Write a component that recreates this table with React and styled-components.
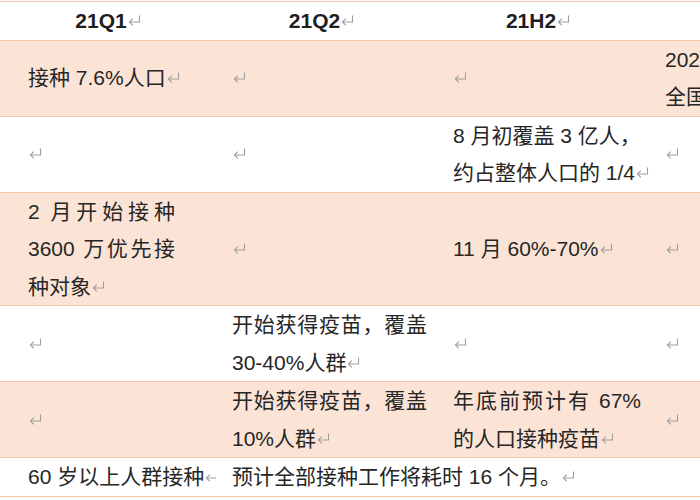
import React from 'react';
import styled, { createGlobalStyle } from 'styled-components';

const GlobalStyle = createGlobalStyle`
  html, body {
    margin: 0;
    padding: 0;
    background: #ffffff;
  }
  body {
    width: 700px;
    height: 500px;
    overflow: hidden;
    font-family: "Liberation Sans", "Noto Sans CJK SC", sans-serif;
    color: #262626;
  }
`;

const Page = styled.div`
  width: 700px;
  height: 500px;
  overflow: hidden;
  padding-top: 1px;
  box-sizing: border-box;
`;

const Table = styled.div`
  display: grid;
  grid-template-columns: 216px 221px 212px 200px;
  width: 849px;
  border-top: 1px solid #f7c6a6;
  font-size: 21px;
  line-height: 37.5px;
`;

const HeadCell = styled.div`
  padding: 0 ${p => p.$pr}px 0 ${p => p.$pl}px;
  border-bottom: 1px solid #f7c6a6;
  text-align: center;
  font-weight: bold;
  color: #1f1f1f;
  white-space: nowrap;
`;

const Cell = styled.div`
  grid-column: span ${p => p.$span || 1};
  display: flex;
  flex-direction: column;
  justify-content: center;
  padding: 0 ${p => p.$pr}px 0 ${p => p.$pl}px;
  background: ${p => (p.$shade ? '#fbe4d6' : '#ffffff')};
  border-bottom: 1px solid #f7c6a6;
  white-space: nowrap;
  min-height: ${p => p.$lines * 37.5}px;
`;

const Line = styled.div`
  display: block;
  width: ${p => (p.$width ? `${p.$width}px` : 'auto')};
  text-align: ${p => (p.$width ? 'justify' : 'left')};
  text-align-last: ${p => (p.$width ? 'justify' : 'auto')};
`;

const MarkSvg = styled.svg`
  display: inline-block;
  width: 13px;
  height: 11px;
  margin-left: 1px;
  vertical-align: 2px;
`;

const Mark = () => (
  <MarkSvg viewBox="0 0 13 11" fill="none" stroke="#9e9e9e" strokeWidth="1.1">
    <path d="M11.5 0.5 V7 H1.5" />
    <path d="M4.8 3.7 L1.5 7 L4.8 10.3" />
  </MarkSvg>
);

const cols = [
  { pl: 28, pr: 28 },
  { pl: 16, pr: 26 },
  { pl: 16, pr: 26 },
  { pl: 16, pr: 26 },
];

const header = ['21Q1', '21Q2', '21H2', ''];

// each cell: list of lines, a line is text or [text, justifyWidth]
const rows = [
  {
    shade: true,
    lines: 2,
    cells: [['接种 7.6%人口'], [], [], ['2022 年中覆盖', '全国大部分人口']],
  },
  {
    shade: false,
    lines: 2,
    cells: [[], [], ['8 月初覆盖 3 亿人，', '约占整体人口的 1/4'], []],
  },
  {
    shade: true,
    lines: 3,
    cells: [
      [['2 月开始接种', 147], ['3600 万优先接', 147], '种对象'],
      [],
      ['11 月 60%-70%'],
      [],
    ],
  },
  {
    shade: false,
    lines: 2,
    cells: [[], [['开始获得疫苗，覆盖', 195], '30-40%人群'], [], []],
  },
  {
    shade: true,
    lines: 2,
    cells: [
      [],
      [['开始获得疫苗，覆盖', 195], '10%人群'],
      [['年底前预计有 67%', 188], '的人口接种疫苗'],
      [],
    ],
  },
  {
    shade: false,
    lines: 1,
    cells: [['60 岁以上人群接种'], { span: 3, lines: ['预计全部接种工作将耗时 16 个月。'] }],
  },
];

const CellLines = ({ lines }) => {
  if (lines.length === 0) {
    return (
      <Line>
        <Mark />
      </Line>
    );
  }
  return lines.map((l, i) => {
    const last = i === lines.length - 1;
    const text = Array.isArray(l) ? l[0] : l;
    const width = Array.isArray(l) ? l[1] : null;
    return (
      <Line key={i} $width={width}>
        {text}
        {last && <Mark />}
      </Line>
    );
  });
};

export default function App() {
  return (
    <>
      <GlobalStyle />
      <Page>
        <Table>
          {header.map((h, i) => (
            <HeadCell key={i} $pl={cols[i].pl} $pr={cols[i].pr}>
              {h}
              {h && <Mark />}
            </HeadCell>
          ))}
          {rows.map((row, r) =>
            row.cells.map((c, i) => {
              const span = c.span || 1;
              const lines = c.span ? c.lines : c;
              return (
                <Cell
                  key={`${r}-${i}`}
                  $span={span}
                  $shade={row.shade}
                  $lines={row.lines}
                  $pl={cols[i].pl}
                  $pr={cols[i].pr}
                >
                  <CellLines lines={lines} />
                </Cell>
              );
            })
          )}
        </Table>
      </Page>
    </>
  );
}
